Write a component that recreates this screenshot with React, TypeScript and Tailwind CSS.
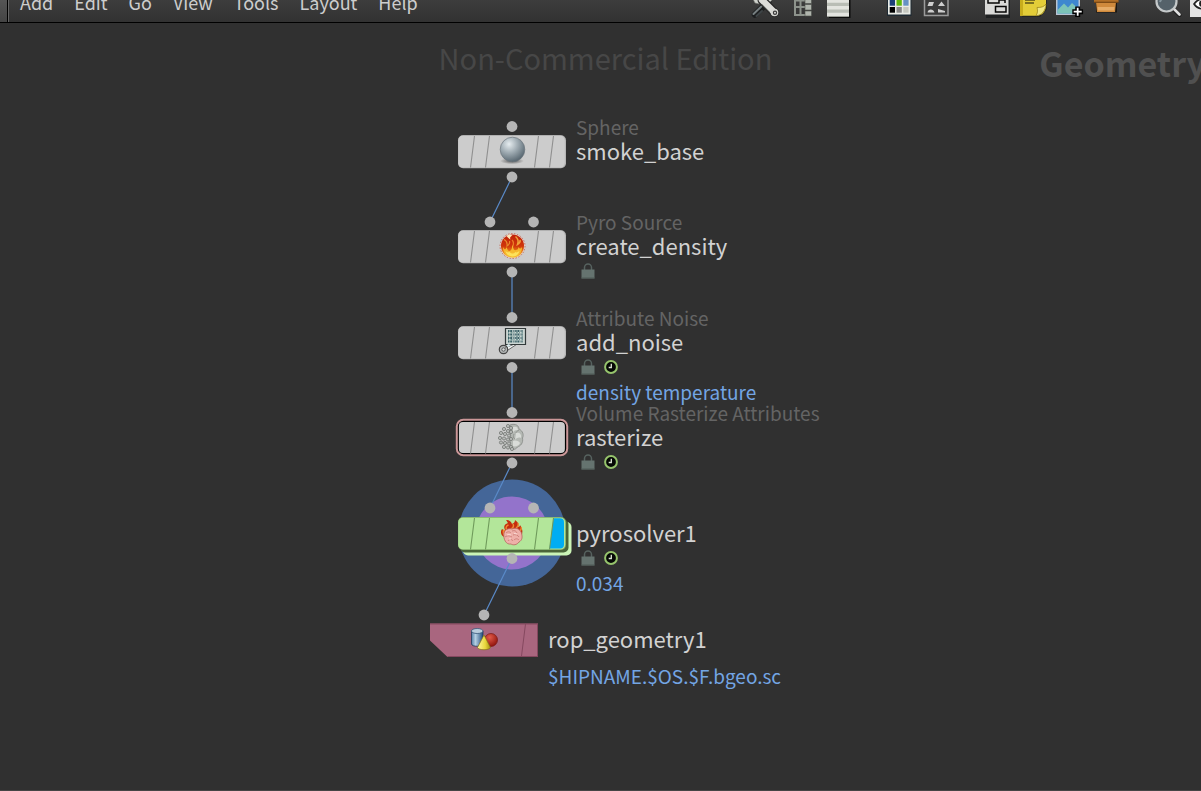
import type { ReactNode } from "react";

const MENUS = ["Add", "Edit", "Go", "View", "Tools", "Layout", "Help"];

/* ---------- Toolbar ---------- */

function Tool({ label, children }: { label: string; children: ReactNode }) {
  return (
    <button type="button" aria-label={label} className="block h-[22px] w-9 shrink-0">
      <svg width="36" height="22" viewBox="0 0 36 22" className="block overflow-visible" aria-hidden="true">
        {children}
      </svg>
    </button>
  );
}

function Toolbar() {
  return (
    <div className="-mr-[21px] ml-auto flex shrink-0 gap-[26px]">
      <div className="flex">
        <Tool label="Tools">
          <path d="M7 14.500 20 2" stroke="#1c1e1f" strokeWidth="6.500" strokeLinecap="round" />
          <path d="M5.500 14 18 2" stroke="#767e80" strokeWidth="2" strokeLinecap="round" />
          <path d="M8.500 16 14 11" stroke="#3f4547" strokeWidth="2" strokeLinecap="round" />
          <path d="M5-1 7 3l4 .8 6-1.500 4 .7L25-1z" fill="#cfd2cc" stroke="#777b76" strokeWidth=".6" />
          <path d="M14 0 26.500 12.500" stroke="#262626" strokeWidth="9" strokeLinecap="round" />
          <path d="M14 0 26.500 12.500" stroke="#dcdcd8" strokeWidth="6.500" strokeLinecap="round" />
          <path d="M14 4 22 12" stroke="#9fa39e" strokeWidth="1" />
          <circle cx="26.500" cy="12.500" r="3.800" fill="#d8d8d4" />
          <circle cx="27" cy="12.800" r="1.600" fill="none" stroke="#3a3a3a" strokeWidth="1.200" />
        </Tool>
        <Tool label="Tree view">
          <path d="M11-1V15h10M11 7h10M11 .5h10M16.500 0v15" stroke="#8d938c" strokeWidth="2" fill="none" />
          <path d="M21-2H27.500v5.500h-6.500zM21 4.500H27.500v5.500h-6.500zM21 11H27.500V16h-6.500z" fill="#b0b5ad" stroke="#4d504c" strokeWidth=".6" />
        </Tool>
        <Tool label="List view">
          <path d="M9 0h21.500v18H9z" fill="#0b0b0b" />
          <path d="M7-2h22v19H7z" fill="#e3e4df" />
          <path d="M7 2.700h22v3.300H7zM7 9.500h22v3.200H7z" fill="#b9bdb5" />
          <path d="M7 16h22v1H7z" fill="#9a9d96" />
        </Tool>
      </div>
      <div className="flex">
        <Tool label="Color palette">
          <path d="M5-2h24.500v18H5z" fill="#1e2a33" />
          <path d="M6-2h22.500v16.500H6z" fill="#e9ebe6" />
          <path d="M7.700 0H13v5.700H7.700z" fill="#1c4078" />
          <path d="M14.500 0h5.300v5.700h-5.300z" fill="#5fb80d" />
          <path d="M21.300 0h5.300v5.700h-5.300z" fill="#6692c4" />
          <path d="M7.700 7H13v5.700H7.700z" fill="#000" />
          <path d="M14.500 7h5.300v5.700h-5.300z" fill="#868686" />
          <path d="M21.300 7h5.300v5.700h-5.300z" fill="#c6c8c0" />
        </Tool>
        <Tool label="Shape palette">
          <path d="M6.500-2h23.500v17.500H6.500z" fill="#3a3a3a" stroke="#9b9b9b" strokeWidth="1.500" />
          <path d="m11 2h5l-1.500 4H9.500zM23.500 1.500l3.500 4.500h-7zM9.500 12.500c.5-4 6-4 7 0zM20 9l7 2v1.500h-7z" fill="#cfcfcf" />
        </Tool>
      </div>
      <div className="flex">
        <Tool label="Network boxes">
          <path d="M6-1h24v19H6z" fill="#1f2122" />
          <path d="M5-2h23.500v16.500H5z" fill="#d9d9d7" />
          <path d="M8-1.500h11V3H8zM15.500 6.500H26V12H15.500zM19 0h6v3" fill="none" stroke="#050505" strokeWidth="1.500" />
        </Tool>
        <Tool label="Sticky note">
          <path d="M6 0h25v9l-7 8H6z" fill="#1f1f1a" opacity=".7" />
          <path d="M4-2h26V6c-1 6-3 9-9 9.700H4z" fill="#e3cd38" />
          <path d="M4-2h3v17.700H4z" fill="#c8ad1c" />
          <path d="M30 4c-2 3-5 3.500-9 3.500 1 3 .5 6-1 8.200 6-.2 9.500-5 10-11.700z" fill="#f0e886" stroke="#937d14" strokeWidth=".7" />
          <path d="M9 0h10M9 3h9" stroke="#17140a" strokeWidth="1.200" />
        </Tool>
        <Tool label="Background image">
          <path d="M4-2h24v17H4z" fill="#b9c4d2" />
          <path d="M5.500-2h21v15.500h-21z" fill="#3e87cf" />
          <path d="M5.500 10 12 3.500l4 4L20 3l6.500 6v4.500h-21z" fill="#7cc3b8" />
          <path d="M25.700 6.500v10.500M20.300 11.700h10.800" stroke="#000" strokeWidth="5" />
          <path d="M25.700 7.700v8M21.700 11.700h8" stroke="#fff" strokeWidth="1.800" />
        </Tool>
        <Tool label="Asset box">
          <path d="M8 3h21v9.500H8z" fill="#1b1712" />
          <path d="M8 2h20l-1 10H9z" fill="#d08a3c" />
          <path d="M9.500 7h17l-.5 3.500H10z" fill="#e6ac67" />
          <path d="M6-2h24.500V2H6z" fill="#b16f27" />
          <path d="M6 1.700h24.500v1.200H6z" fill="#754411" />
        </Tool>
      </div>
      <div className="flex">
        <Tool label="Search">
          <path d="m22 7.500 7.500 7.500" stroke="#1c1c1c" strokeWidth="4" strokeLinecap="round" />
          <path d="m22 7 7.500 7.500" stroke="#dedede" strokeWidth="2.600" strokeLinecap="round" />
          <circle cx="16.500" cy="1.500" r="10" fill="#55626a" stroke="#c5c9ca" strokeWidth="2.200" />
          <path d="M10 2a8 8 0 0 1 11-5" fill="none" stroke="#83939b" strokeWidth="2" />
        </Tool>
        <Tool label="Display options">
          <path d="M4-2h26v19H4z" fill="#e4e4e4" />
          <path d="M8 4c5-7 14-7 18 0-5 7-14 6-18 0z" fill="#fff" stroke="#222" strokeWidth="1.600" />
          <circle cx="16.500" cy="3.500" r="3.500" fill="#222" />
        </Tool>
      </div>
    </div>
  );
}

/* ---------- Badges ---------- */

function LockBadge() {
  return (
    <svg width="14" height="16" viewBox="0 0 14 16" role="img" aria-label="Locked">
      <path d="M3.500 7V4.500a3.500 3.500 0 0 1 7 0V7" fill="none" stroke="#56625f" strokeWidth="1.500" />
      <path d="M.5 6.500h13V15.500H.5z" fill="#65736f" />
      <path d="M.5 14.500h13v1H.5z" fill="#4e5a57" />
    </svg>
  );
}

function ClockBadge() {
  return (
    <svg width="14" height="14" viewBox="0 0 14 14" role="img" aria-label="Time dependent">
      <circle cx="7" cy="7" r="5.900" fill="#050805" stroke="#96c46c" strokeWidth="2" />
      <path d="M7.300 3.800v3.700H4.700" fill="none" stroke="#dfe8d8" strokeWidth="1.300" />
    </svg>
  );
}

/* ---------- Node icons, in node coordinates ---------- */

function SphereIcon() {
  return (
    <g>
      <defs>
        <radialGradient id="steel" cx=".36" cy=".28" r=".75">
          <stop offset="0" stopColor="#e6edf0" />
          <stop offset=".45" stopColor="#a3afb6" />
          <stop offset="1" stopColor="#56656f" />
        </radialGradient>
        <radialGradient id="shade">
          <stop offset="0" stopColor="#555" />
          <stop offset="1" stopColor="#555" stopOpacity="0" />
        </radialGradient>
      </defs>
      <ellipse cx="54" cy="26" rx="12" ry="3.200" fill="url(#shade)" />
      <circle cx="54.500" cy="14.500" r="12.300" fill="url(#steel)" stroke="#6c767c" strokeWidth=".7" />
    </g>
  );
}

function FireIcon() {
  return (
    <g transform="translate(54.500 16)">
      <defs>
        <linearGradient id="blaze" x1="0" y1="0" x2="0" y2="1">
          <stop offset="0" stopColor="#c0200a" />
          <stop offset=".5" stopColor="#cf360a" />
          <stop offset=".8" stopColor="#ee8f1c" />
          <stop offset="1" stopColor="#f9d544" />
        </linearGradient>
      </defs>
      <circle r="12.500" fill="#e2d0ca" stroke="#c4705f" strokeWidth="1" strokeDasharray="1.500 1.500" />
      <circle r="11.500" fill="url(#blaze)" />
      <path d="M-6-10c2-1.500 4-1.500 6-.5-2 1-3 2-2 4-1.500-1-3-2-4-3.500z" fill="#fae6b8" />
      <path d="M3-9.500C6-7 6-4 5-1.500 7-2.500 8-4 7.500-6" fill="none" stroke="#f0a23a" strokeWidth="1.500" />
      <path d="M-8.500-6.500C-5.500-5-5-3-5.500 0c2-1 3-3 2.500-5" fill="none" stroke="#e98a2b" strokeWidth="1.200" />
      <path d="M-.5-6c2 2 2 4 .5 7" fill="none" stroke="#eb7d25" strokeWidth="1.300" />
      <path d="M-9.500 1c2 4 3 2 3.500 0 1 3 2 5 4 3.500S-1 1 0-1c1 3 1 6 3.500 5S5.500 3 6 1c1 2 2 2 3.500 0C10 6 6 11.500 0 11.500S-10 6-9.500 1z" fill="#f5b92e" />
      <path d="M-7 5c2 2 3 1 4 1 2 2 4 2 6 0 1 1 2 0 4-1-1 4-4 5.500-7 5.500S-6 9-7 5z" fill="#fde25a" />
    </g>
  );
}

const NOISE_ROWS = [5, 8.5, 12, 15.5];

function NoiseIcon() {
  return (
    <g>
      <path d="M44 23 63 15.500 47 26z" fill="#f4f6f6" stroke="#555" strokeWidth=".9" />
      <path d="M47.500 2.500h20v16h-20z" fill="#cbd5d2" stroke="#32393a" strokeWidth="1.200" />
      {NOISE_ROWS.map((y) => (
        <path key={y} d={`M50 ${y}h15`} stroke="#3a6167" strokeWidth="2" strokeDasharray="1.5 .7 2 1.2 1 .8" />
      ))}
      <path d="M50 6.800h15M50 10.200h15M50 13.700h15" stroke="#5a8684" strokeWidth="1" strokeDasharray="1 1.5 2 1" />
      <path d="M50 18 46 24l7-5z" fill="#dceff3" />
      <circle cx="45.500" cy="23.500" r="4.200" fill="#b4b8b8" stroke="#444" strokeWidth="1.200" />
      <path d="m45.500 23.500 3-2.500" stroke="#555" strokeWidth=".8" />
      <circle cx="45.500" cy="23.500" r="1.700" fill="#d9dcdc" stroke="#444" strokeWidth=".8" />
    </g>
  );
}

const GRAINS = [
  [50, 5], [46, 8], [50, 10], [53, 7], [43, 12], [47, 13], [51, 14.5], [42, 17], [46, 17.5], [50, 18.5],
  [43, 21.5], [47, 22], [51, 22.5], [46, 26], [50, 26.5], [53, 11], [53, 18], [53, 26], [54, 28],
];

function RasterizeIcon() {
  return (
    <g>
      <path d="M52 4c6-2 9 1 9 4 4 2 5 6 3.500 9 1 5-2 8-5 9-2 3-5 3-7.500 1z" fill="#b4b8b3" stroke="#858985" strokeWidth=".8" />
      <path d="M55 6c3-1 5 0 5 3-3 0-5 1-5 3zM58 12c3-1 6 1 5 5-2-1-5 0-6 2zM55 20c3-1 6 0 7 2-1 3-5 4-7 3z" fill="#d9dcd8" />
      <path d="M56 13c-1 2-1 4 1 5M61 9c-2 1-3 2-3 3" fill="none" stroke="#929691" strokeWidth="1" />
      {GRAINS.map(([x, y]) => (
        <circle key={`${x}-${y}`} cx={x} cy={y} r="1.600" fill="#b8bbb8" stroke="#737774" strokeWidth=".8" />
      ))}
    </g>
  );
}

function PyroIcon() {
  return (
    <g>
      <path d="M46 20c-3-2-4-5-2-8 1 1 2 1 3 1-2-4 0-6 3-7-1-1-1-2-2-3 3 0 5 1 6 4 2-1 3-2 3-4 3 2 4 4 3 7 1 0 2-1 2-2 3 4 3 8 1 12z" fill="#c42d0e" />
      <path d="M46 18c-1-2-1-3-.5-4.500 2 1 3 0 3-1-1-2 0-4 2-4.500M53 12c2-1 3-3 2-5M58 11c2-1 2.500-3 2-5M62 14c1-1 1.500-2 1.300-4" fill="none" stroke="#f08a35" strokeWidth="1.400" />
      <path d="M46 16c1-4 5-5 8-4 4-2 8 0 9.500 4 1 4 1 7-2.500 9-2 3-6 3.500-8 2-5 1-8-5-7-11z" fill="#eeb0a9" stroke="#b8665f" strokeWidth=".8" />
      <path d="M48 16c2-2 4-1 5 0M54 14c3-1 4 0 5 2M47 20c3-2 5-1 7 0M55 18c2-1 5 0 6 2M50 24c1-2 4-2 5 0M56 23c2-2 4-1 5 0" fill="none" stroke="#cb7c76" strokeWidth=".9" />
      <path d="M49 18c1-.5 3-.5 4 0M56 16.500l3 .5M51 22h2" fill="none" stroke="#fbdcd7" strokeWidth="1" />
    </g>
  );
}

function GeometryIcon() {
  return (
    <g>
      <defs>
        <linearGradient id="cyl">
          <stop offset="0" stopColor="#5480a9" />
          <stop offset=".35" stopColor="#b4cfe2" />
          <stop offset="1" stopColor="#214b7c" />
        </linearGradient>
        <radialGradient id="ball" cx=".4" cy=".3" r=".7">
          <stop offset="0" stopColor="#e25a48" />
          <stop offset="1" stopColor="#92150f" />
        </radialGradient>
        <linearGradient id="cone">
          <stop offset="0" stopColor="#fff6a0" />
          <stop offset=".6" stopColor="#e8d73b" />
          <stop offset="1" stopColor="#a58d14" />
        </linearGradient>
      </defs>
      <path d="M41.500 8v13c0 3 11.500 3 11.500 0V8z" fill="url(#cyl)" stroke="#203c5a" strokeWidth=".8" />
      <ellipse cx="47.200" cy="8" rx="5.800" ry="2.500" fill="#b9cddd" stroke="#38587a" strokeWidth=".8" />
      <circle cx="61" cy="17" r="6.500" fill="url(#ball)" stroke="#7a1712" strokeWidth=".7" />
      <path d="m54 12 6.500 12.500c-1 3-12 3-13 0z" fill="url(#cone)" stroke="#837118" strokeWidth=".7" />
    </g>
  );
}

/* ---------- Nodes ---------- */

const SLASHES = "M16.500 1 12.500 32.500M31.500 1 27.500 32.500M80.500 1 76.500 32.500M95.500 1 91.500 32.500";

function Dot({ x, y }: { x: number; y: number }) {
  return <circle cx={x} cy={y} r="5.400" fill="#b5b5b5" />;
}

function PlainBody() {
  return (
    <>
      <rect width="108" height="33" y=".3" rx="5" fill="#b5b5b5" />
      <rect width="106.500" height="32" y=".6" x=".3" rx="5" fill="#cccccc" />
      <path d={SLASHES} stroke="#8f8f8f" strokeWidth="1.100" />
    </>
  );
}

function SelectedBody() {
  return (
    <>
      <rect x="-1.200" y="-1.200" width="110.400" height="35.400" rx="6.500" fill="#000" stroke="#cb9798" strokeWidth="2" />
      <rect x=".9" y="1.100" width="106" height="31" rx="4" fill="#cccccc" />
      <path d={SLASHES} stroke="#8f8f8f" strokeWidth="1.100" />
    </>
  );
}

function DisplayedBody() {
  return (
    <>
      <rect x="5" y="5" width="108.500" height="33.500" rx="5" fill="#cbf4b6" />
      <rect x="2" y="2.500" width="108.500" height="33" rx="5" fill="#4a6539" />
      <rect width="108" height="33" rx="5" fill="#7eab66" />
      <rect x=".2" y=".8" width="107" height="31.500" rx="4.500" fill="#b3e69a" />
      <path d="M95.500 1.200H102q4 0 4 4V27.500q0 4-4 4H91.500z" fill="#00adf2" />
      <path d={SLASHES} stroke="#6f9a5b" strokeWidth="1.100" />
    </>
  );
}

function OutputBody() {
  return (
    <>
      <path d="M0 .5h108v33.500H17.500L0 17.500z" fill="#a9667f" />
      <path d="M0 1h108M95.500 1 91.500 33M107.500 1v32M17.500 33.500H108" stroke="#85485f" strokeWidth="1" fill="none" />
    </>
  );
}

type NodeData = {
  name: string;
  type?: string;
  info?: string;
  badges: "none" | "lock" | "both";
  place: string;
  body: ReactNode;
  icon: ReactNode;
  dots: [number, number][];
};

const NODES: NodeData[] = [
  { name: "smoke_base", type: "Sphere", badges: "none", place: "left-[458px] top-28", body: <PlainBody />, icon: <SphereIcon />, dots: [[54, -8.5], [54, 42]] },
  { name: "create_density", type: "Pyro Source", badges: "lock", place: "left-[458px] top-[207px]", body: <PlainBody />, icon: <FireIcon />, dots: [[32, -8], [75.5, -8], [54, 42]] },
  { name: "add_noise", type: "Attribute Noise", info: "density temperature", badges: "both", place: "left-[458px] top-[303px]", body: <PlainBody />, icon: <NoiseIcon />, dots: [[54, -8.5], [54, 41.5]] },
  { name: "rasterize", type: "Volume Rasterize Attributes", badges: "both", place: "left-[458px] top-[398px]", body: <SelectedBody />, icon: <RasterizeIcon />, dots: [[54, -8.5], [54, 42]] },
  { name: "pyrosolver1", info: "0.034", badges: "both", place: "left-[458px] top-[494px]", body: <DisplayedBody />, icon: <PyroIcon />, dots: [[32, -9], [75.5, -9], [54, 41.5]] },
  { name: "rop_geometry1", info: "$HIPNAME.$OS.$F.bgeo.sc", badges: "none", place: "left-[430px] top-[600px]", body: <OutputBody />, icon: <GeometryIcon />, dots: [[54, -8]] },
];

function GraphNode({ node }: { node: NodeData }) {
  return (
    <div className={`absolute flex w-max items-start gap-2.5 ${node.place}`}>
      <button type="button" aria-label={node.name} className="block h-[34px] w-[108px] shrink-0">
        <svg width="108" height="34" viewBox="0 0 108 34" className="block overflow-visible" aria-hidden="true">
          {node.body}
          {node.icon}
          {node.dots.map(([x, y]) => (
            <Dot key={`${x},${y}`} x={x} y={y} />
          ))}
        </svg>
      </button>
      <div className="-mt-5 text-[19px] leading-6 whitespace-nowrap">
        <div className="h-[23px] text-[#646464]">{node.type}</div>
        <div className="text-[22px] text-[#d2d2d2]">{node.name}</div>
        {node.badges !== "none" && (
          <div className="flex h-[27px] items-center gap-[9px] pl-[5px]">
            <LockBadge />
            {node.badges === "both" && <ClockBadge />}
          </div>
        )}
        {node.info && <div className={node.badges === "none" ? "mt-3.5 text-[#73a5e4]" : "text-[#73a5e4]"}>{node.info}</div>}
      </div>
    </div>
  );
}

export default function App() {
  return (
    <div className="flex h-screen flex-col overflow-hidden bg-[#303030] font-['Noto_Sans_CJK_SC','Noto_Sans',sans-serif]">
      <header className="flex h-[23px] shrink-0 overflow-hidden border-b border-black bg-linear-to-b from-[#3d3d3d] to-[#323232]">
        <div className="w-2 shrink-0 border-r border-black bg-linear-to-b from-[#555] to-[#444]" />
        <nav aria-label="Network editor" className="flex shrink-0 gap-[21px] border-l border-[#666] pl-[11px] text-[18px] leading-6 text-[#cdcdcd]">
          {MENUS.map((m) => (
            <button key={m} type="button" className="-mt-2.5 h-6">
              {m}
            </button>
          ))}
        </nav>
        <Toolbar />
      </header>
      <main className="relative min-h-0 flex-1 overflow-hidden border-b border-[#454545]">
        <p className="pt-3.5 pl-[10px] text-center text-[29px] leading-10 text-[#474747]">Non-Commercial Edition</p>
        <h1 className="absolute top-[18px] -right-[5px] text-[34px] leading-11 font-bold text-[#505050]">Geometry</h1>
        <svg className="absolute inset-0 h-full w-full" aria-hidden="true">
          <circle cx="512" cy="510" r="53.500" fill="#446698" />
          <circle cx="512" cy="510" r="36.500" fill="#9373cb" />
          <path d="M512 154 490 199M512 249v45M512 344v45M512 440 490 485M512 535 484 592" fill="none" stroke="#5a8ac8" strokeWidth="1.200" />
        </svg>
        {NODES.map((n) => (
          <GraphNode key={n.name} node={n} />
        ))}
      </main>
    </div>
  );
}
